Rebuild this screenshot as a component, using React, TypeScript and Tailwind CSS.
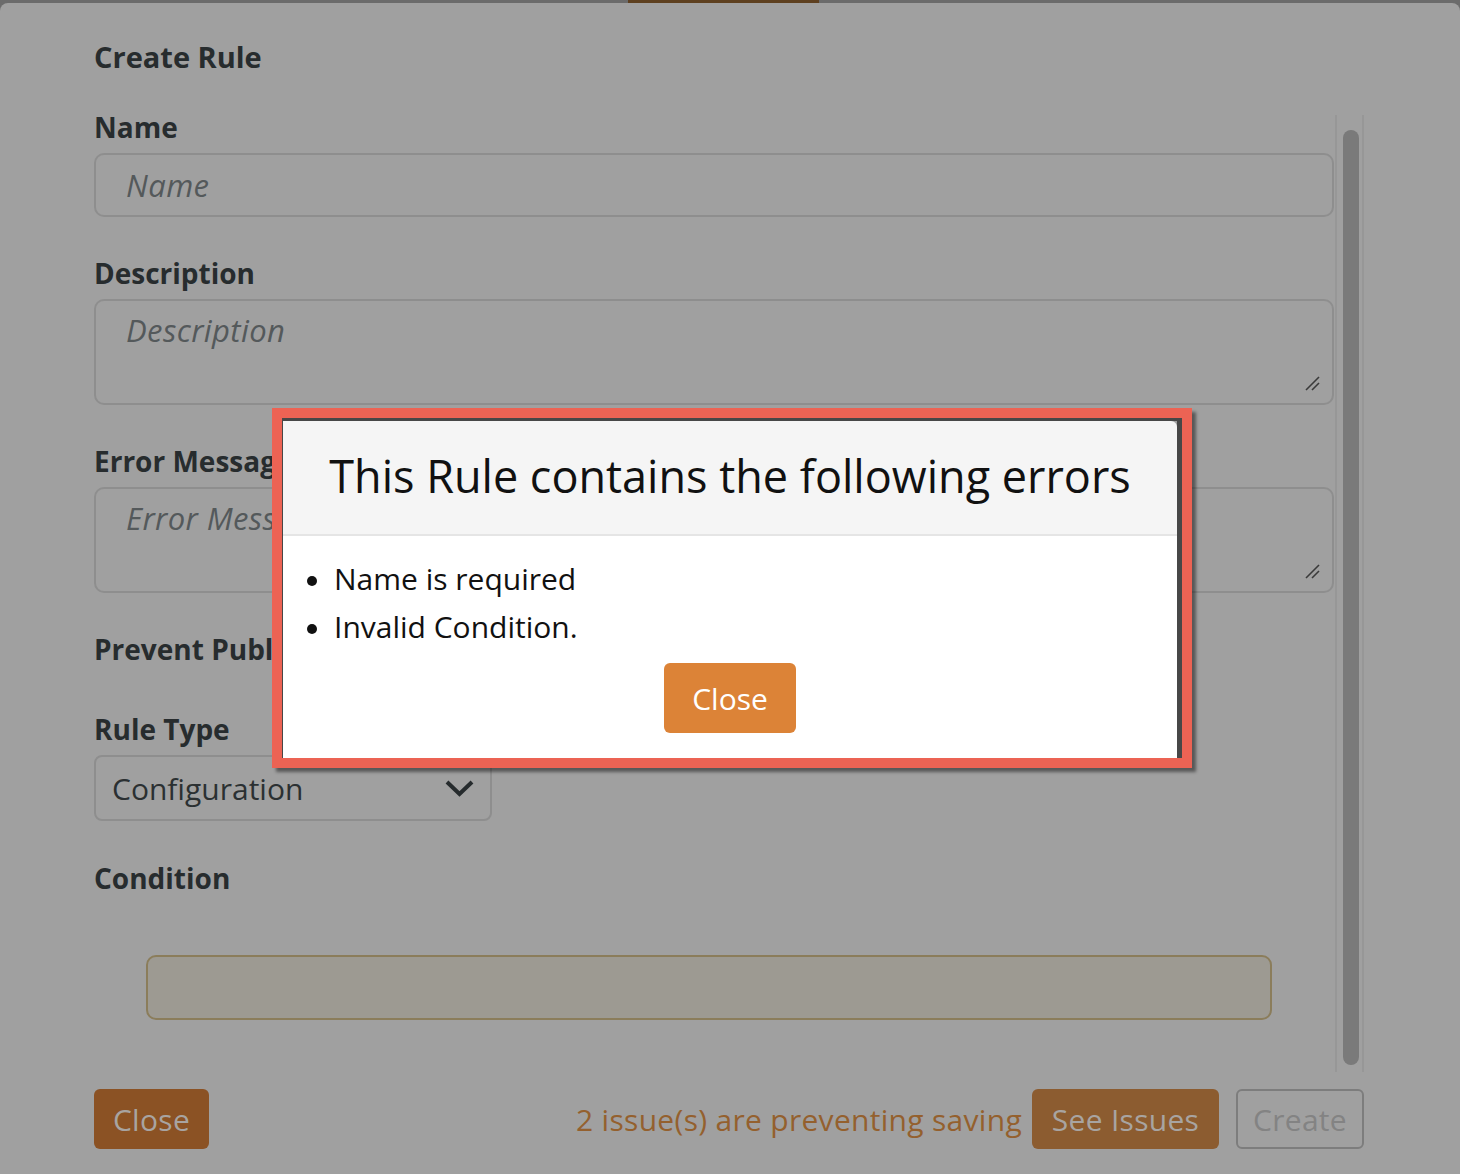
import React from "react";

function Label({ children, className = "" }: { children: React.ReactNode; className?: string }) {
  return (
    <div className={"h-[34px] text-[28px] leading-[34px] font-bold text-[#272c2e] whitespace-nowrap " + className}>
      {children}
    </div>
  );
}

function ResizeHandle() {
  return (
    <svg className="absolute right-[12px] bottom-[12px]" width="15" height="15" viewBox="0 0 15 15">
      <line x1="1" y1="14" x2="14" y2="1" stroke="#3a3a3a" strokeWidth="1.6" />
      <line x1="7" y1="14" x2="14" y2="7" stroke="#3a3a3a" strokeWidth="1.6" />
    </svg>
  );
}

export default function App() {
  return (
    <div className="w-[1460px] h-[1174px] bg-[#6b6b6b] overflow-hidden relative font-['Open_Sans',sans-serif]">
      <div className="h-[3px] flex">
        <div className="ml-[628px] w-[191px] bg-[#5e4020]" />
      </div>
      <div className="h-[1171px] bg-[#a0a0a0] rounded-t-[8px] pl-[94px] pr-[96px] flex flex-col">
        <div className="mt-[37px] h-[34px] text-[29px] leading-[34px] font-bold text-[#272c2e]">Create Rule</div>
        <div className="flex mt-[36px] h-[962px]">
          <div className="w-[1240px] flex flex-col">
            <Label>Name</Label>
            <div className="mt-[9px] h-[64px] border-2 border-[#8e8e8e] rounded-[10px] pl-[30px] flex items-center text-[31px] tracking-[0.4px] italic text-[#54595b]">
              Name
            </div>
            <Label className="mt-[39px]">Description</Label>
            <div className="relative mt-[9px] h-[106px] border-2 border-[#8e8e8e] rounded-[10px] pl-[30px] pt-[11px] text-[31px] tracking-[0.4px] leading-[36px] italic text-[#54595b]">
              Description
              <ResizeHandle />
            </div>
            <Label className="mt-[39px]">Error Message</Label>
            <div className="relative mt-[9px] h-[106px] border-2 border-[#8e8e8e] rounded-[10px] pl-[30px] pt-[11px] text-[31px] tracking-[0.4px] leading-[36px] italic text-[#54595b]">
              Error Message
              <ResizeHandle />
            </div>
            <Label className="mt-[39px]">Prevent Publish</Label>
            <Label className="mt-[46px]">Rule Type</Label>
            <div className="mt-[9px] w-[398px] h-[66px] border-2 border-[#8e8e8e] rounded-[8px] pl-[16px] pr-[16px] flex items-center justify-between text-[30px] text-[#2b3032]">
              <span>Configuration</span>
              <svg width="29" height="17" viewBox="0 0 29 17">
                <polyline points="2,2 14.5,14 27,2" fill="none" stroke="#262b2d" strokeWidth="4" />
              </svg>
            </div>
            <Label className="mt-[40px]">Condition</Label>
            <div className="mt-[60px] ml-[52px] w-[1126px] h-[65px] bg-[#9d9a92] border-2 border-[#8b7d5b] rounded-[10px]" />
          </div>
          <div className="ml-[1px] mt-[5px] w-[29px] h-[957px] border-x-2 border-[#979797] pl-[6px] pt-[15px]">
            <div className="w-[16px] h-[935px] rounded-full bg-[#7a7a7a]" />
          </div>
        </div>
        <div className="mt-[17px] h-[60px] flex items-center">
          <div className="w-[115px] h-[60px] rounded-[6px] bg-[#8b5224] flex items-center justify-center text-[30px] tracking-[0.3px] text-[#a8a4a1]">
            Close
          </div>
          <div className="flex-1" />
          <div className="text-[30px] tracking-[0.3px] text-[#94602e] mr-[10px] whitespace-nowrap">2 issue(s) are preventing saving</div>
          <div className="w-[187px] h-[60px] rounded-[6px] bg-[#8c5c30] flex items-center justify-center text-[30px] tracking-[0.3px] text-[#a8a4a1]">
            See Issues
          </div>
          <div className="ml-[17px] w-[128px] h-[60px] rounded-[6px] border-2 border-[#7d7d7d] flex items-center justify-center text-[30px] tracking-[0.3px] text-[#838383]">
            Create
          </div>
        </div>
      </div>

      <div className="absolute left-[272px] top-[408px] w-[920px] h-[360px] border-[10px] border-[#ec6354] shadow-[4px_4px_3px_rgba(0,0,0,0.45)]">
        <div className="w-full h-full border-t-[3px] border-l-[1px] border-r-[5px] border-[#474747] flex flex-col">
          <div className="h-[113px] pb-[3px] bg-[#f5f5f5] rounded-tr-[6px] flex items-center justify-center text-[45px] text-[#111] whitespace-nowrap">
            This Rule contains the following errors
          </div>
          <div className="h-[2px] bg-[#e5e5e5]" />
          <div className="flex-1 bg-white pt-[19px] flex flex-col">
            <div className="pl-[24px] flex flex-col text-[30px] leading-[48px] text-[#111]">
              <div className="flex items-center">
                <span className="w-[10px] h-[10px] rounded-full bg-[#111] mt-[4px]" />
                <span className="ml-[17px]">Name is required</span>
              </div>
              <div className="flex items-center">
                <span className="w-[10px] h-[10px] rounded-full bg-[#111] mt-[4px]" />
                <span className="ml-[17px]">Invalid Condition.</span>
              </div>
            </div>
            <div className="mt-[12px] flex justify-center">
              <div className="w-[132px] h-[70px] rounded-[6px] bg-[#dc8337] flex items-center justify-center text-[30px] text-white">
                Close
              </div>
            </div>
          </div>
        </div>
      </div>
    </div>
  );
}
